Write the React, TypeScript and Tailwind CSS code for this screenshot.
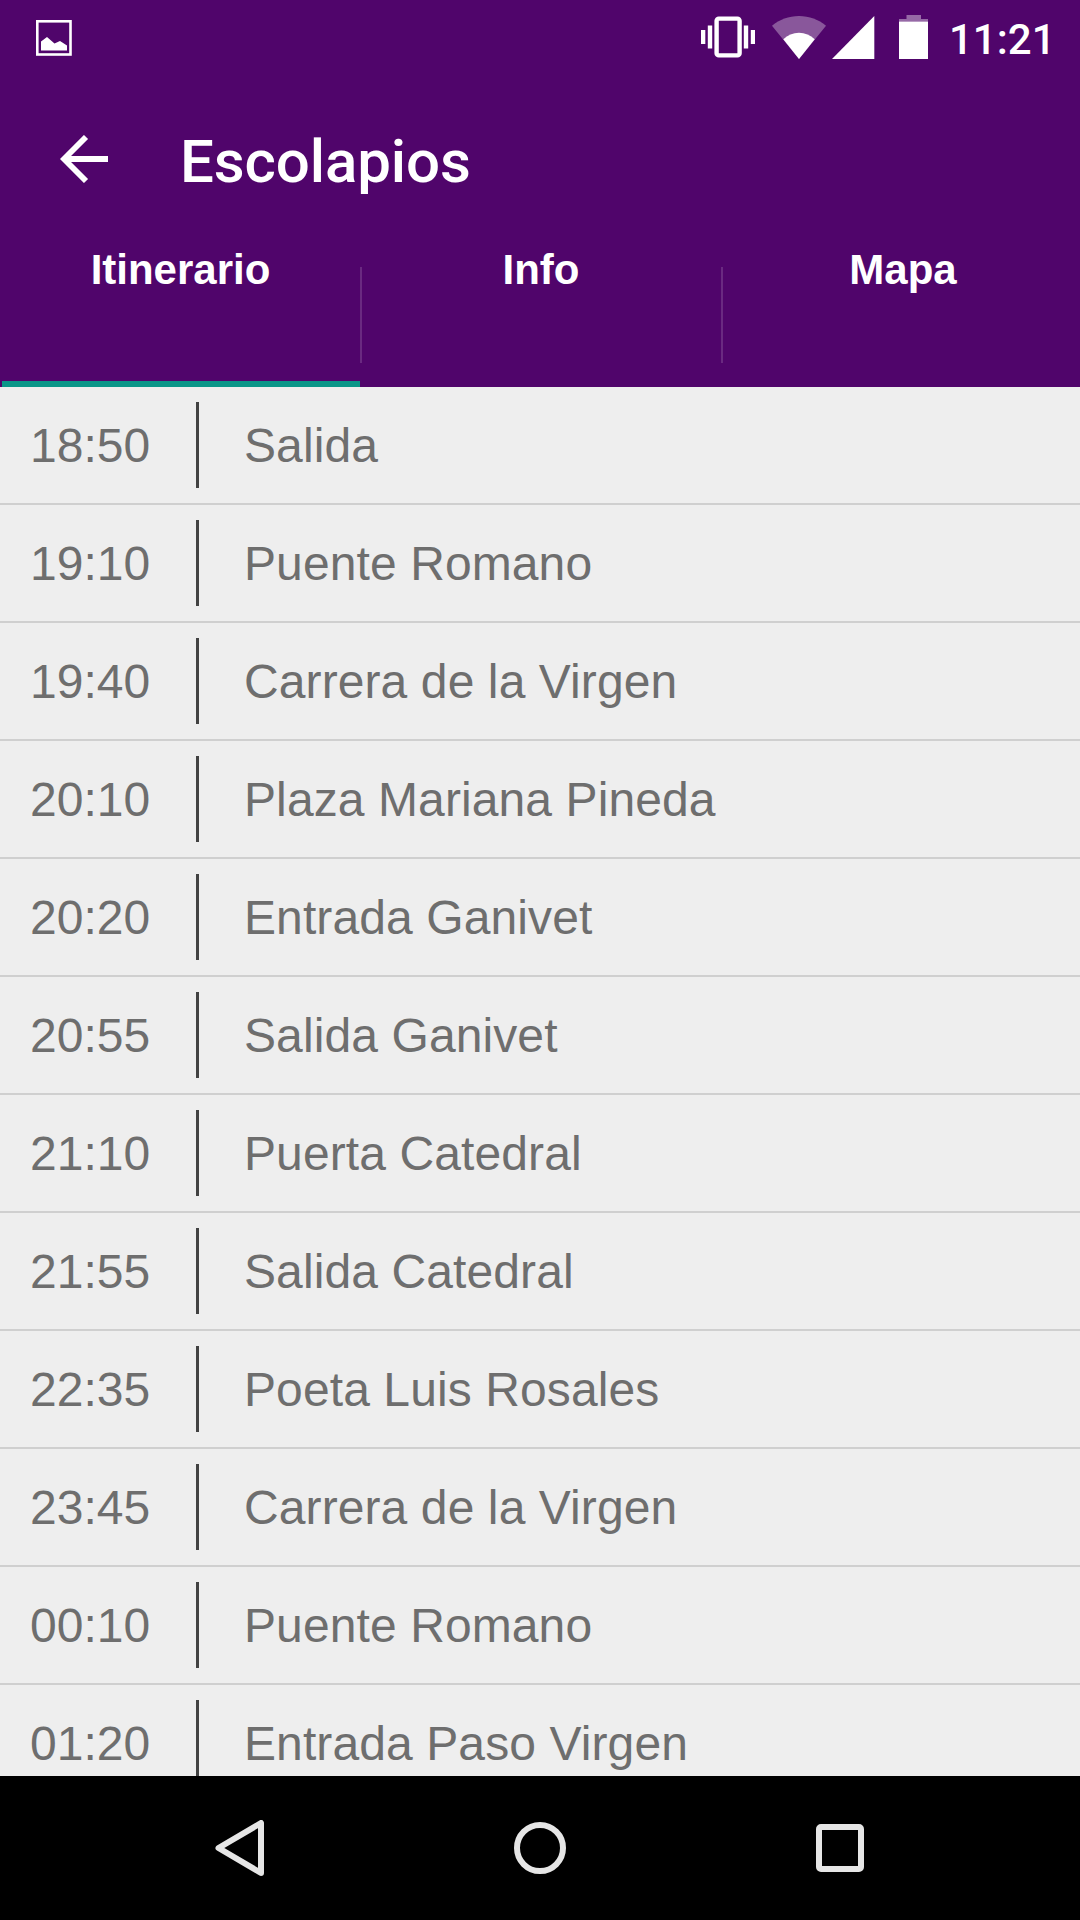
const TABS = [
  { label: 'Itinerario', width: 'w-[362px]', pad: 'pr-px' },
  { label: 'Info', width: 'w-[361px]', pad: 'pr-[3px]' },
  { label: 'Mapa', width: 'w-[361px]', pad: 'pr-px' },
]

const STOPS = [
  { time: '18:50', place: 'Salida' },
  { time: '19:10', place: 'Puente Romano' },
  { time: '19:40', place: 'Carrera de la Virgen' },
  { time: '20:10', place: 'Plaza Mariana Pineda' },
  { time: '20:20', place: 'Entrada Ganivet' },
  { time: '20:55', place: 'Salida Ganivet' },
  { time: '21:10', place: 'Puerta Catedral' },
  { time: '21:55', place: 'Salida Catedral' },
  { time: '22:35', place: 'Poeta Luis Rosales' },
  { time: '23:45', place: 'Carrera de la Virgen' },
  { time: '00:10', place: 'Puente Romano' },
  { time: '01:20', place: 'Entrada Paso Virgen' },
]

function PictureIcon() {
  return (
    <svg width="36" height="36" viewBox="0 0 36 36" fill="none">
      <rect x="1.3" y="1.3" width="33.2" height="33.2" stroke="#fff" strokeWidth="2.6" />
      <path d="M5 30.5V21.5L11 17L18.5 23.5L24 21L31 25.5V30.5Z" fill="#fff" />
    </svg>
  )
}

function VibrateIcon() {
  return (
    <svg width="54" height="42" viewBox="0 0 54 42" fill="#fff">
      <rect x="0" y="14" width="4.3" height="14" />
      <rect x="6.8" y="9.5" width="4.4" height="23" />
      <rect x="15.6" y="2.6" width="23" height="36.8" rx="2.2" fill="none" stroke="#fff" strokeWidth="4.4" />
      <rect x="42.8" y="9.5" width="4.4" height="23" />
      <rect x="49.8" y="14" width="4.2" height="14" />
    </svg>
  )
}

function WifiIcon() {
  return (
    <svg width="54" height="43" viewBox="0 0 54 43" fill="#fff">
      <path d="M27 43L0 9.7C7.5 3.6 16.8 0 27 0S46.5 3.6 54 9.7Z" opacity=".33" />
      <path d="M27 43L11.3 23.3C15.6 19 21 16.8 27 16.8S38.4 19 42.7 23.3Z" />
    </svg>
  )
}

function SignalIcon() {
  return (
    <svg width="43" height="43" viewBox="0 0 43 43" fill="#fff">
      <path d="M0 43H42.3V0Z" />
    </svg>
  )
}

function BatteryIcon() {
  return (
    <svg width="29" height="44" viewBox="0 0 29 44" fill="#fff">
      <path d="M7.5 0H22V4H29V6.5H0V4H7.5Z" opacity=".4" />
      <rect y="6.5" width="29" height="37.5" />
    </svg>
  )
}

function StatusBar() {
  return (
    <div className="flex h-[75px] items-start pt-[16px] pr-[28px] pl-[36px] text-white">
      <div className="pt-[4px]">
        <PictureIcon />
      </div>
      <div className="ml-auto flex items-start">
        <VibrateIcon />
        <div className="ml-[17px]">
          <WifiIcon />
        </div>
        <div className="ml-[6px]">
          <SignalIcon />
        </div>
        <div className="-mt-px ml-[24px]">
          <BatteryIcon />
        </div>
        <span className="ml-[21px] w-[103px] pt-[3px] font-['Roboto'] text-[42px] leading-[42px] font-medium whitespace-nowrap">
          11:21
        </span>
      </div>
    </div>
  )
}

function Toolbar() {
  return (
    <div className="flex h-[168px] items-start pl-[60px] text-white">
      <svg className="mt-[60px]" width="48" height="48" viewBox="0 0 48 48" fill="none" stroke="#fff" strokeWidth="5.8">
        <path d="M48 24H5M26 2L4 24L26 46" />
      </svg>
      <h1 className="mt-[52px] ml-[72px] font-['Roboto'] text-[60px] leading-[70px] font-medium tracking-[-0.1px]">
        Escolapios
      </h1>
    </div>
  )
}

function TabBar() {
  return (
    <div className="flex h-[144px] overflow-hidden text-white">
      {TABS.map((tab, i) => (
        <div key={tab.label} className={`flex shrink-0 flex-col ${tab.width}`}>
          <div className="flex flex-1">
            <div className={`flex-1 pt-[3px] text-center text-[42px] leading-[48px] font-bold ${tab.pad}`}>
              {tab.label}
            </div>
            {i < TABS.length - 1 && <div className="-ml-[2px] mt-[24px] h-[96px] w-[2px] bg-white/15" />}
          </div>
          {i === 0 && <div className="mr-[2px] ml-[2px] h-[6px] bg-[#0a9688]" />}
        </div>
      ))}
    </div>
  )
}

function NavBar() {
  return (
    <div className="flex h-[144px] items-center bg-black pl-[215px]">
      <svg width="49" height="56" viewBox="0 0 49 56" fill="none" stroke="#e6e6e6" strokeWidth="6" strokeLinejoin="round">
        <path d="M46 3V53L3.5 28Z" />
      </svg>
      <svg className="ml-[250px]" width="52" height="52" viewBox="0 0 52 52" fill="none" stroke="#e6e6e6" strokeWidth="6">
        <circle cx="26" cy="26" r="23" />
      </svg>
      <svg className="ml-[250px]" width="48" height="48" viewBox="0 0 48 48" fill="none" stroke="#e6e6e6" strokeWidth="6">
        <rect x="3" y="3" width="42" height="42" rx="2" />
      </svg>
    </div>
  )
}

export default function App() {
  return (
    <div className="flex h-[1920px] w-[1080px] flex-col overflow-hidden bg-[#eeeeee] font-['Liberation_Sans',sans-serif]">
      <header className="shrink-0 bg-[#50056b]">
        <StatusBar />
        <Toolbar />
        <TabBar />
      </header>

      <main className="min-h-0 flex-1 overflow-hidden">
        {STOPS.map((stop) => (
          <div
            key={stop.time}
            className="flex h-[118px] items-center border-b-2 border-[#cfcfcf] text-[48px] leading-[56px] text-[#6e6e6e]"
          >
            <span className="w-[196px] pt-[2px] pl-[30px]">{stop.time}</span>
            <div className="h-[86px] w-[3px] bg-[#424242]" />
            <span className="pt-[2px] pl-[45px] tracking-[0.1px] whitespace-nowrap">{stop.place}</span>
          </div>
        ))}
      </main>

      <NavBar />
    </div>
  )
}
